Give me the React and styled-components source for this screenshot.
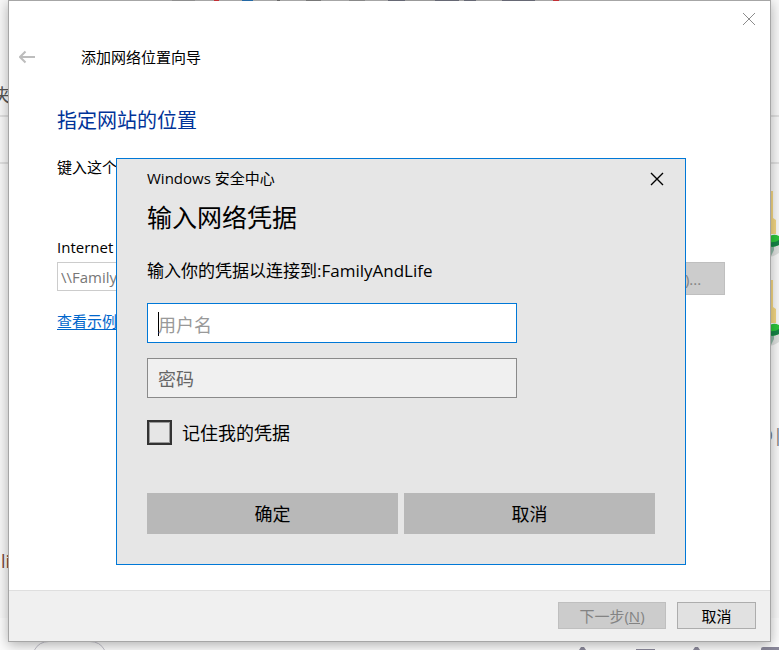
import React from "react";
import styled, { createGlobalStyle } from "styled-components";

const GlobalStyle = createGlobalStyle`
  *, *::before, *::after { box-sizing: border-box; }
  html, body, #root { height: 100%; }
  body {
    margin: 0;
    overflow: hidden;
    font-family: "Open Sans", "Noto Sans CJK SC", sans-serif;
    font-size: 15px;
    line-height: 20px;
    color: #000;
  }
  h1, h2, p { margin: 0; font-weight: 400; }
  button, input { font: inherit; color: inherit; border-radius: 0; margin: 0; }
`;

const Desktop = styled.div`
  position: relative;
  min-height: 100%;
  display: flex;
  flex-direction: column;
  padding: 0 8px 8px;
  background: #f8f8f8;
`;

const Backdrop = styled.div`
  position: absolute;
  inset: 0;
  overflow: hidden;
  display: flex;
  flex-direction: column;
`;

const BackRibbon = styled.div`
  display: flex;
  align-items: flex-end;
  height: ${(p) => p.$height}px;
  padding-bottom: 8px;
  border-bottom: 2px solid #e0e0e0;
`;

const BackFiles = styled.div`
  flex: 1;
  display: flex;
  justify-content: space-between;
  align-items: flex-end;
`;

const BackFolders = styled.div`
  width: 10px;
  height: 100%;
  display: flex;
  flex-direction: column;
  padding-top: 27px;
`;

const BackText = styled.span`
  width: ${(p) => p.$width}px;
  display: flex;
  justify-content: flex-end;
  font-size: 18px;
  line-height: 24px;
  color: ${(p) => p.$color};
  white-space: nowrap;
`;

const BackLeft = styled.div`
  padding-bottom: 45px;
`;

const BackRight = styled.div`
  padding-top: 54px;
`;

const BackStatus = styled.div`
  height: 32px;
  display: flex;
  align-items: flex-end;
  justify-content: space-between;
  padding-left: 34px;
  background: #fcfcfc;

  svg { display: block; }
`;

const Wizard = styled.section`
  position: relative;
  flex: 1;
  display: flex;
  flex-direction: column;
  border: 1px solid #a6a6a6;
  border-top: 0;
  background: #fff;
  box-shadow: 0 3px 12px rgba(0, 0, 0, 0.3);
`;

const TopEdge = styled.div`
  height: 1px;
  background: linear-gradient(
    90deg,
    #a6a6a6 163px, #8f8f8f 163px 186px, #a6a6a6 186px 205px, #c22f35 205px 210px,
    #a6a6a6 210px 233px, #2469a5 233px 244px, #a6a6a6 244px 268px, #666 268px 271px,
    #a6a6a6 271px 297px, #777 297px 312px, #a6a6a6 312px 340px, #888 340px 356px,
    #a6a6a6 356px 379px, #666874 379px 396px, #999 396px 426px, #666874 426px 450px,
    #a6a6a6 450px 455px, #666874 455px 467px, #a6a6a6 467px 493px, #666874 493px 526px,
    #a6a6a6 526px 544px, #c22f35 544px 550px, #a6a6a6 550px
  );
`;

const WizardBar = styled.header`
  display: flex;
  align-items: flex-start;
  justify-content: space-between;
  padding: 9px 12px 0 8px;
`;

const WizardTitle = styled.div`
  display: flex;
  align-items: center;
  gap: 44px;
  padding-top: 37px;
`;

const IconButton = styled.button`
  display: flex;
  align-items: center;
  justify-content: center;
  width: ${(p) => p.$size}px;
  height: ${(p) => p.$size}px;
  padding: 0;
  border: 0;
  background: none;
  color: ${(p) => p.$color};
`;

const WizardBody = styled.div`
  flex: 1;
  display: flex;
  flex-direction: column;
  align-items: flex-start;
  padding: 40px 45px 0 48px;
`;

const Heading = styled.h1`
  font-size: 20px;
  line-height: 28px;
  color: #003399;
`;

const Prompt = styled.p`
  margin: 22px 0 60px;
`;

const AddressLabel = styled.label`
  margin-bottom: 5px;
`;

const AddressRow = styled.div`
  align-self: stretch;
  display: flex;
  gap: 12px;
  margin-bottom: 16px;
`;

const AddressInput = styled.input`
  flex: 1;
  min-width: 0;
  height: 29px;
  padding: 0 3px;
  border: 1px solid #ccc;
  background: #fff;
  &:disabled { color: #777; }
`;

const PushButton = styled.button`
  width: ${(p) => p.$width}px;
  height: ${(p) => p.$height}px;
  padding: 0;
  border: 1px solid #adadad;
  background: #e1e1e1;

  &:disabled {
    border-color: #bfbfbf;
    background: #ccc;
    color: #838383;
  }
`;

const Link = styled.a`
  color: #0066cc;
  text-underline-offset: 2px;
`;

const WizardFooter = styled.footer`
  display: flex;
  justify-content: flex-end;
  gap: 11px;
  padding: 11px 14px 12px;
  border-top: 1px solid #dfdfdf;
  background: #f0f0f0;
`;

const Dialog = styled.form`
  position: absolute;
  top: 158px;
  left: 107px;
  right: 84px;
  display: flex;
  flex-direction: column;
  padding: 8px 30px 30px;
  border: 1px solid #0078d7;
  background: #e6e6e6;
  font-size: 18px;
  line-height: 24px;
`;

const DialogBar = styled.div`
  display: flex;
  align-items: flex-start;
  justify-content: space-between;
  margin-right: -14px;
  font-size: 15px;
  line-height: 22px;
`;

const DialogTitle = styled.h2`
  margin: 9px 0 25px;
  font-size: 25px;
  line-height: 34px;
`;

const DialogMessage = styled.p`
  font-size: 17px;
`;

const Fields = styled.div`
  display: flex;
  flex-direction: column;
  gap: 15px;
  max-width: 370px;
  margin: 20px 0 22px;
`;

const Field = styled.input`
  width: 100%;
  height: 40px;
  padding: 2px 10px 0;
  border: 1px solid #8a8a8a;
  background: #f0f0f0;
  outline: 0;
  &::placeholder { color: #666; opacity: 1; }
`;

const ActiveField = styled(Field)`
  padding-top: 4px;
  border-color: #0078d7;
  background: linear-gradient(#000, #000) 10px 8px / 1px 24px no-repeat #fff;
  caret-color: transparent;
  &::placeholder { color: #999; }
`;

const Remember = styled.label`
  display: flex;
  align-items: center;
  gap: 10px;
`;

const Checkbox = styled.input`
  appearance: none;
  width: 25px;
  height: 25px;
  border: 2px solid #333;
  outline: 1px solid #999;
  outline-offset: -3px;
  &:checked { background: #0078d7; }
`;

const Actions = styled.div`
  display: grid;
  grid-template-columns: 1fr 1fr;
  gap: 6px;
  margin-top: 48px;
`;

const ActionButton = styled.button`
  height: 41px;
  padding: 0;
  border: 0;
  background: #b8b8b8;
`;

function CloseIcon({ weight }) {
  return (
    <svg width="14" height="14" viewBox="0 0 14 14" fill="none" stroke="currentColor" strokeWidth={weight}>
      <path d="M1 1 13 13M13 1 1 13" />
    </svg>
  );
}

function BackIcon() {
  return (
    <svg width="16" height="14" viewBox="0 0 16 14" fill="none" stroke="currentColor" strokeWidth="2">
      <path d="M1 7H16M6.500 1.500 1 7 6.500 12.500" />
    </svg>
  );
}

function FolderEdge() {
  return (
    <svg width="10" height="89" viewBox="0 0 10 89">
      <path d="M0 0H4V27L7 29V43H0Z" fill="#f3d683" />
      <path d="M0 57Q4 50 10 54V62Q4 66 0 66Z" fill="#dde0de" />
      <path d="M0 55H5V59L2 65H0Z" fill="#8db5a4" />
      <path d="M0 46Q4 42 10 45V54Q4 57 0 55Z" fill="#2cc43b" />
      <path d="M0 51Q6 52 10 49V54Q4 57 0 55Z" fill="#168347" />
    </svg>
  );
}

export default function App() {
  return (
    <>
      <GlobalStyle />
      <Desktop>
        <Backdrop aria-hidden="true">
          <BackRibbon $height={117}>
            <BackText $width={11} $color="#555">夹</BackText>
          </BackRibbon>
          <BackRibbon $height={47} />
          <BackFiles>
            <BackLeft>
              <BackText $width={10} $color="#7a4a3c">li</BackText>
            </BackLeft>
            <BackFolders>
              <FolderEdge />
              <FolderEdge />
              <BackRight>
                <BackText $width={14} $color="#777">D|</BackText>
              </BackRight>
            </BackFolders>
          </BackFiles>
          <BackStatus>
            <svg width="71" height="9" viewBox="0 0 71 9" fill="none" stroke="#c2c1cb">
              <path d="M0.500 9Q5 0.500 15 0.500H56Q66 0.500 70.500 9" />
            </svg>
            <svg width="201" height="5" viewBox="0 0 201 5" fill="#8b899b">
              <path d="M1 5 3 2H6L8 5ZM58 4H77V5H58ZM115 5 117 2H120L122 5ZM183 5V4Q183 2 185 2H201V5Z" />
            </svg>
          </BackStatus>
        </Backdrop>

        <Wizard>
          <TopEdge />
          <WizardBar>
            <WizardTitle>
              <IconButton type="button" $size={20} $color="#bdbdbd" aria-label="返回" disabled>
                <BackIcon />
              </IconButton>
              <span>添加网络位置向导</span>
            </WizardTitle>
            <IconButton type="button" $size={18} $color="#8c8c8c" aria-label="关闭向导">
              <CloseIcon weight="1" />
            </IconButton>
          </WizardBar>
          <WizardBody>
            <Heading>指定网站的位置</Heading>
            <Prompt>键入这个</Prompt>
            <AddressLabel htmlFor="address">Internet</AddressLabel>
            <AddressRow>
              <AddressInput id="address" defaultValue="\\FamilyAndLife" disabled />
              <PushButton type="button" $width={108} $height={33} disabled>浏览(B)...</PushButton>
            </AddressRow>
            <Link href="#examples">查看示例</Link>
          </WizardBody>
          <WizardFooter>
            <PushButton type="button" $width={108} $height={27} disabled>
              下一步(<u>N</u>)
            </PushButton>
            <PushButton type="button" $width={79} $height={27}>取消</PushButton>
          </WizardFooter>

          <Dialog role="dialog" aria-labelledby="dialog-title" onSubmit={(e) => e.preventDefault()}>
            <DialogBar>
              <span>Windows 安全中心</span>
              <IconButton type="button" $size={24} $color="#000" aria-label="关闭">
                <CloseIcon weight="1.400" />
              </IconButton>
            </DialogBar>
            <DialogTitle id="dialog-title">输入网络凭据</DialogTitle>
            <DialogMessage>输入你的凭据以连接到:FamilyAndLife</DialogMessage>
            <Fields>
              <ActiveField type="text" name="username" placeholder="用户名" aria-label="用户名" />
              <Field type="password" name="password" placeholder="密码" aria-label="密码" />
            </Fields>
            <Remember>
              <Checkbox type="checkbox" name="remember" />
              记住我的凭据
            </Remember>
            <Actions>
              <ActionButton type="submit">确定</ActionButton>
              <ActionButton type="button">取消</ActionButton>
            </Actions>
          </Dialog>
        </Wizard>
      </Desktop>
    </>
  );
}
